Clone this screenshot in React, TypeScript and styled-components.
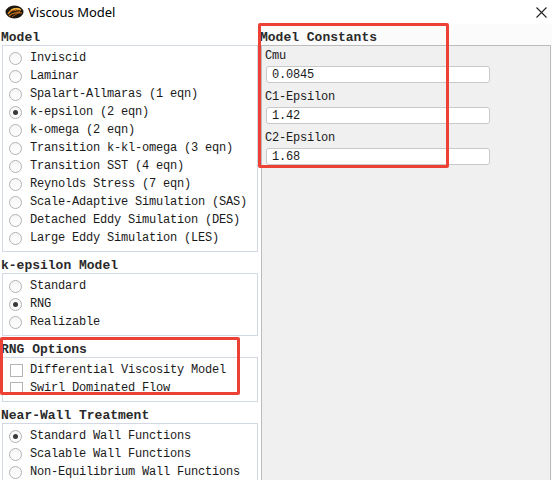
import styled, { createGlobalStyle } from "styled-components";

const GlobalStyle = createGlobalStyle`
  html, body {
    margin: 0;
    padding: 0;
    background: #ffffff;
  }
`;

type Option = { label: string; checked?: boolean };

const modelOptions: Option[] = [
  { label: "Inviscid" },
  { label: "Laminar" },
  { label: "Spalart-Allmaras (1 eqn)" },
  { label: "k-epsilon (2 eqn)", checked: true },
  { label: "k-omega (2 eqn)" },
  { label: "Transition k-kl-omega (3 eqn)" },
  { label: "Transition SST (4 eqn)" },
  { label: "Reynolds Stress (7 eqn)" },
  { label: "Scale-Adaptive Simulation (SAS)" },
  { label: "Detached Eddy Simulation (DES)" },
  { label: "Large Eddy Simulation (LES)" },
];

const kepsOptions: Option[] = [
  { label: "Standard" },
  { label: "RNG", checked: true },
  { label: "Realizable" },
];

const rngOptions: Option[] = [
  { label: "Differential Viscosity Model" },
  { label: "Swirl Dominated Flow" },
];

const wallOptions: Option[] = [
  { label: "Standard Wall Functions", checked: true },
  { label: "Scalable Wall Functions" },
  { label: "Non-Equilibrium Wall Functions" },
];

const constants = [
  { label: "Cmu", value: "0.0845" },
  { label: "C1-Epsilon", value: "1.42" },
  { label: "C2-Epsilon", value: "1.68" },
];

function AppIcon() {
  return (
    <svg width="19" height="14" viewBox="0 0 19 14">
      <ellipse cx="9.5" cy="7" rx="9" ry="6.5" fill="#1c1610" />
      <path d="M3 9 C6 4, 11 3, 16 5" stroke="#e39a2a" strokeWidth="1.4" fill="none" />
      <path d="M4 11 C8 7, 12 7, 17 8" stroke="#c9741c" strokeWidth="1.2" fill="none" />
      <path d="M6 5 C9 3, 13 3, 15 4" stroke="#f2c04a" strokeWidth="1" fill="none" />
      <path d="M5 7 C8 5, 12 5, 15 7 C12 9, 9 10, 7 12" stroke="#b85f16" strokeWidth="1" fill="none" />
    </svg>
  );
}

function CloseIcon() {
  return (
    <svg width="11" height="11" viewBox="0 0 11 11">
      <path d="M0.5 0.5 L10.5 10.5 M10.5 0.5 L0.5 10.5" stroke="#222" strokeWidth="1.1" />
    </svg>
  );
}

function RadioList({ items }: { items: Option[] }) {
  return (
    <Box>
      {items.map((it) => (
        <Row key={it.label}>
          <Radio $checked={!!it.checked} />
          <ItemText>{it.label}</ItemText>
        </Row>
      ))}
    </Box>
  );
}

function CheckList({ items }: { items: Option[] }) {
  return (
    <Box>
      {items.map((it) => (
        <Row key={it.label}>
          <Check />
          <ItemText>{it.label}</ItemText>
        </Row>
      ))}
    </Box>
  );
}

export default function App() {
  return (
    <Window>
      <GlobalStyle />
      <TitleBar>
        <AppIcon />
        <Title>Viscous Model</Title>
        <CloseBtn>
          <CloseIcon />
        </CloseBtn>
      </TitleBar>
      <Body>
        <LeftColumn>
          <Header>Model</Header>
          <RadioList items={modelOptions} />
          <Header>k-epsilon Model</Header>
          <RadioList items={kepsOptions} />
          <Header>RNG Options</Header>
          <CheckList items={rngOptions} />
          <Header>Near-Wall Treatment</Header>
          <RadioList items={wallOptions} />
        </LeftColumn>
        <RightColumn>
          <Header>Model Constants</Header>
          <Panel>
            {constants.map((c) => (
              <Field key={c.label}>
                <FieldLabel>{c.label}</FieldLabel>
                <ValueInput>{c.value}</ValueInput>
              </Field>
            ))}
          </Panel>
        </RightColumn>
      </Body>
      <Annotation $x={258} $y={23} $w={191} $h={145} />
      <Annotation $x={0} $y={337} $w={240} $h={58} />
    </Window>
  );
}

const Window = styled.div`
  position: relative;
  width: 552px;
  height: 480px;
  overflow: hidden;
  background: #fbfbfb;
  font-family: "Liberation Mono", "DejaVu Sans Mono", monospace;
  color: #1a1a1a;
`;

const TitleBar = styled.div`
  height: 24px;
  display: flex;
  align-items: center;
  gap: 4px;
  padding-left: 5px;
  background: #ffffff;
`;

const Title = styled.div`
  font-family: "Noto Sans", "Liberation Sans", sans-serif;
  font-size: 13px;
  color: #000;
`;

const CloseBtn = styled.div`
  margin-left: auto;
  width: 46px;
  height: 24px;
  display: flex;
  align-items: center;
  justify-content: center;
  margin-right: -12px;
`;

const Body = styled.div`
  display: grid;
  grid-template-columns: 261px 290px;
  align-items: start;
`;

const LeftColumn = styled.div`
  display: flex;
  flex-direction: column;
  padding-left: 2px;
  background: #ffffff;
  min-height: 460px;
`;

const RightColumn = styled.div`
  display: flex;
  flex-direction: column;
`;

const Header = styled.div`
  height: 16px;
  margin-top: 5px;
  margin-left: -1px;
  font-size: 13px;
  font-weight: bold;
  line-height: 17px;
  color: #2a2a2a;
  white-space: nowrap;
`;

const Box = styled.div`
  width: 254px;
  border: 1px solid #d3d9e4;
  background: #ffffff;
  padding: 3px 0 4px 0;
  display: flex;
  flex-direction: column;
`;

const Row = styled.div`
  height: 18px;
  display: flex;
  align-items: center;
  padding-left: 6px;
`;

const Radio = styled.span<{ $checked: boolean }>`
  position: relative;
  width: 13px;
  height: 13px;
  box-sizing: border-box;
  border-radius: 50%;
  border: 1px solid #b2b2b2;
  background: linear-gradient(#f6f6f6, #ffffff);
  flex-shrink: 0;
  margin-right: 8px;

  &::after {
    content: "";
    display: ${(p) => (p.$checked ? "block" : "none")};
    position: absolute;
    left: 3px;
    top: 3px;
    width: 5px;
    height: 5px;
    border-radius: 50%;
    background: #3a3a3a;
  }
`;

const Check = styled.span`
  width: 13px;
  height: 13px;
  box-sizing: border-box;
  border: 1px solid #b4b4b4;
  background: #ffffff;
  flex-shrink: 0;
  margin-left: 1px;
  margin-right: 7px;
`;

const ItemText = styled.span`
  font-size: 12px;
  letter-spacing: -0.2px;
  white-space: nowrap;
`;

const Panel = styled.div`
  height: 440px;
  background: #f0f0f0;
  border: 1px solid #bcbcbc;
  padding: 2px 0 0 3px;
  display: flex;
  flex-direction: column;
  gap: 6px;
`;

const Field = styled.div`
  display: flex;
  flex-direction: column;
  gap: 2px;
`;

const FieldLabel = styled.div`
  height: 16px;
  line-height: 17px;
  font-size: 12px;
  letter-spacing: -0.2px;
`;

const ValueInput = styled.div`
  width: 224px;
  height: 17px;
  box-sizing: border-box;
  margin-left: 1px;
  padding-left: 5px;
  border: 1px solid #c9c9c9;
  border-radius: 3px;
  background: #ffffff;
  font-size: 12px;
  letter-spacing: -0.2px;
  line-height: 16px;
`;

const Annotation = styled.div<{ $x: number; $y: number; $w: number; $h: number }>`
  position: absolute;
  left: ${(p) => p.$x}px;
  top: ${(p) => p.$y}px;
  width: ${(p) => p.$w}px;
  height: ${(p) => p.$h}px;
  box-sizing: border-box;
  border: 3px solid #ee4136;
  border-radius: 2px;
  pointer-events: none;
`;
